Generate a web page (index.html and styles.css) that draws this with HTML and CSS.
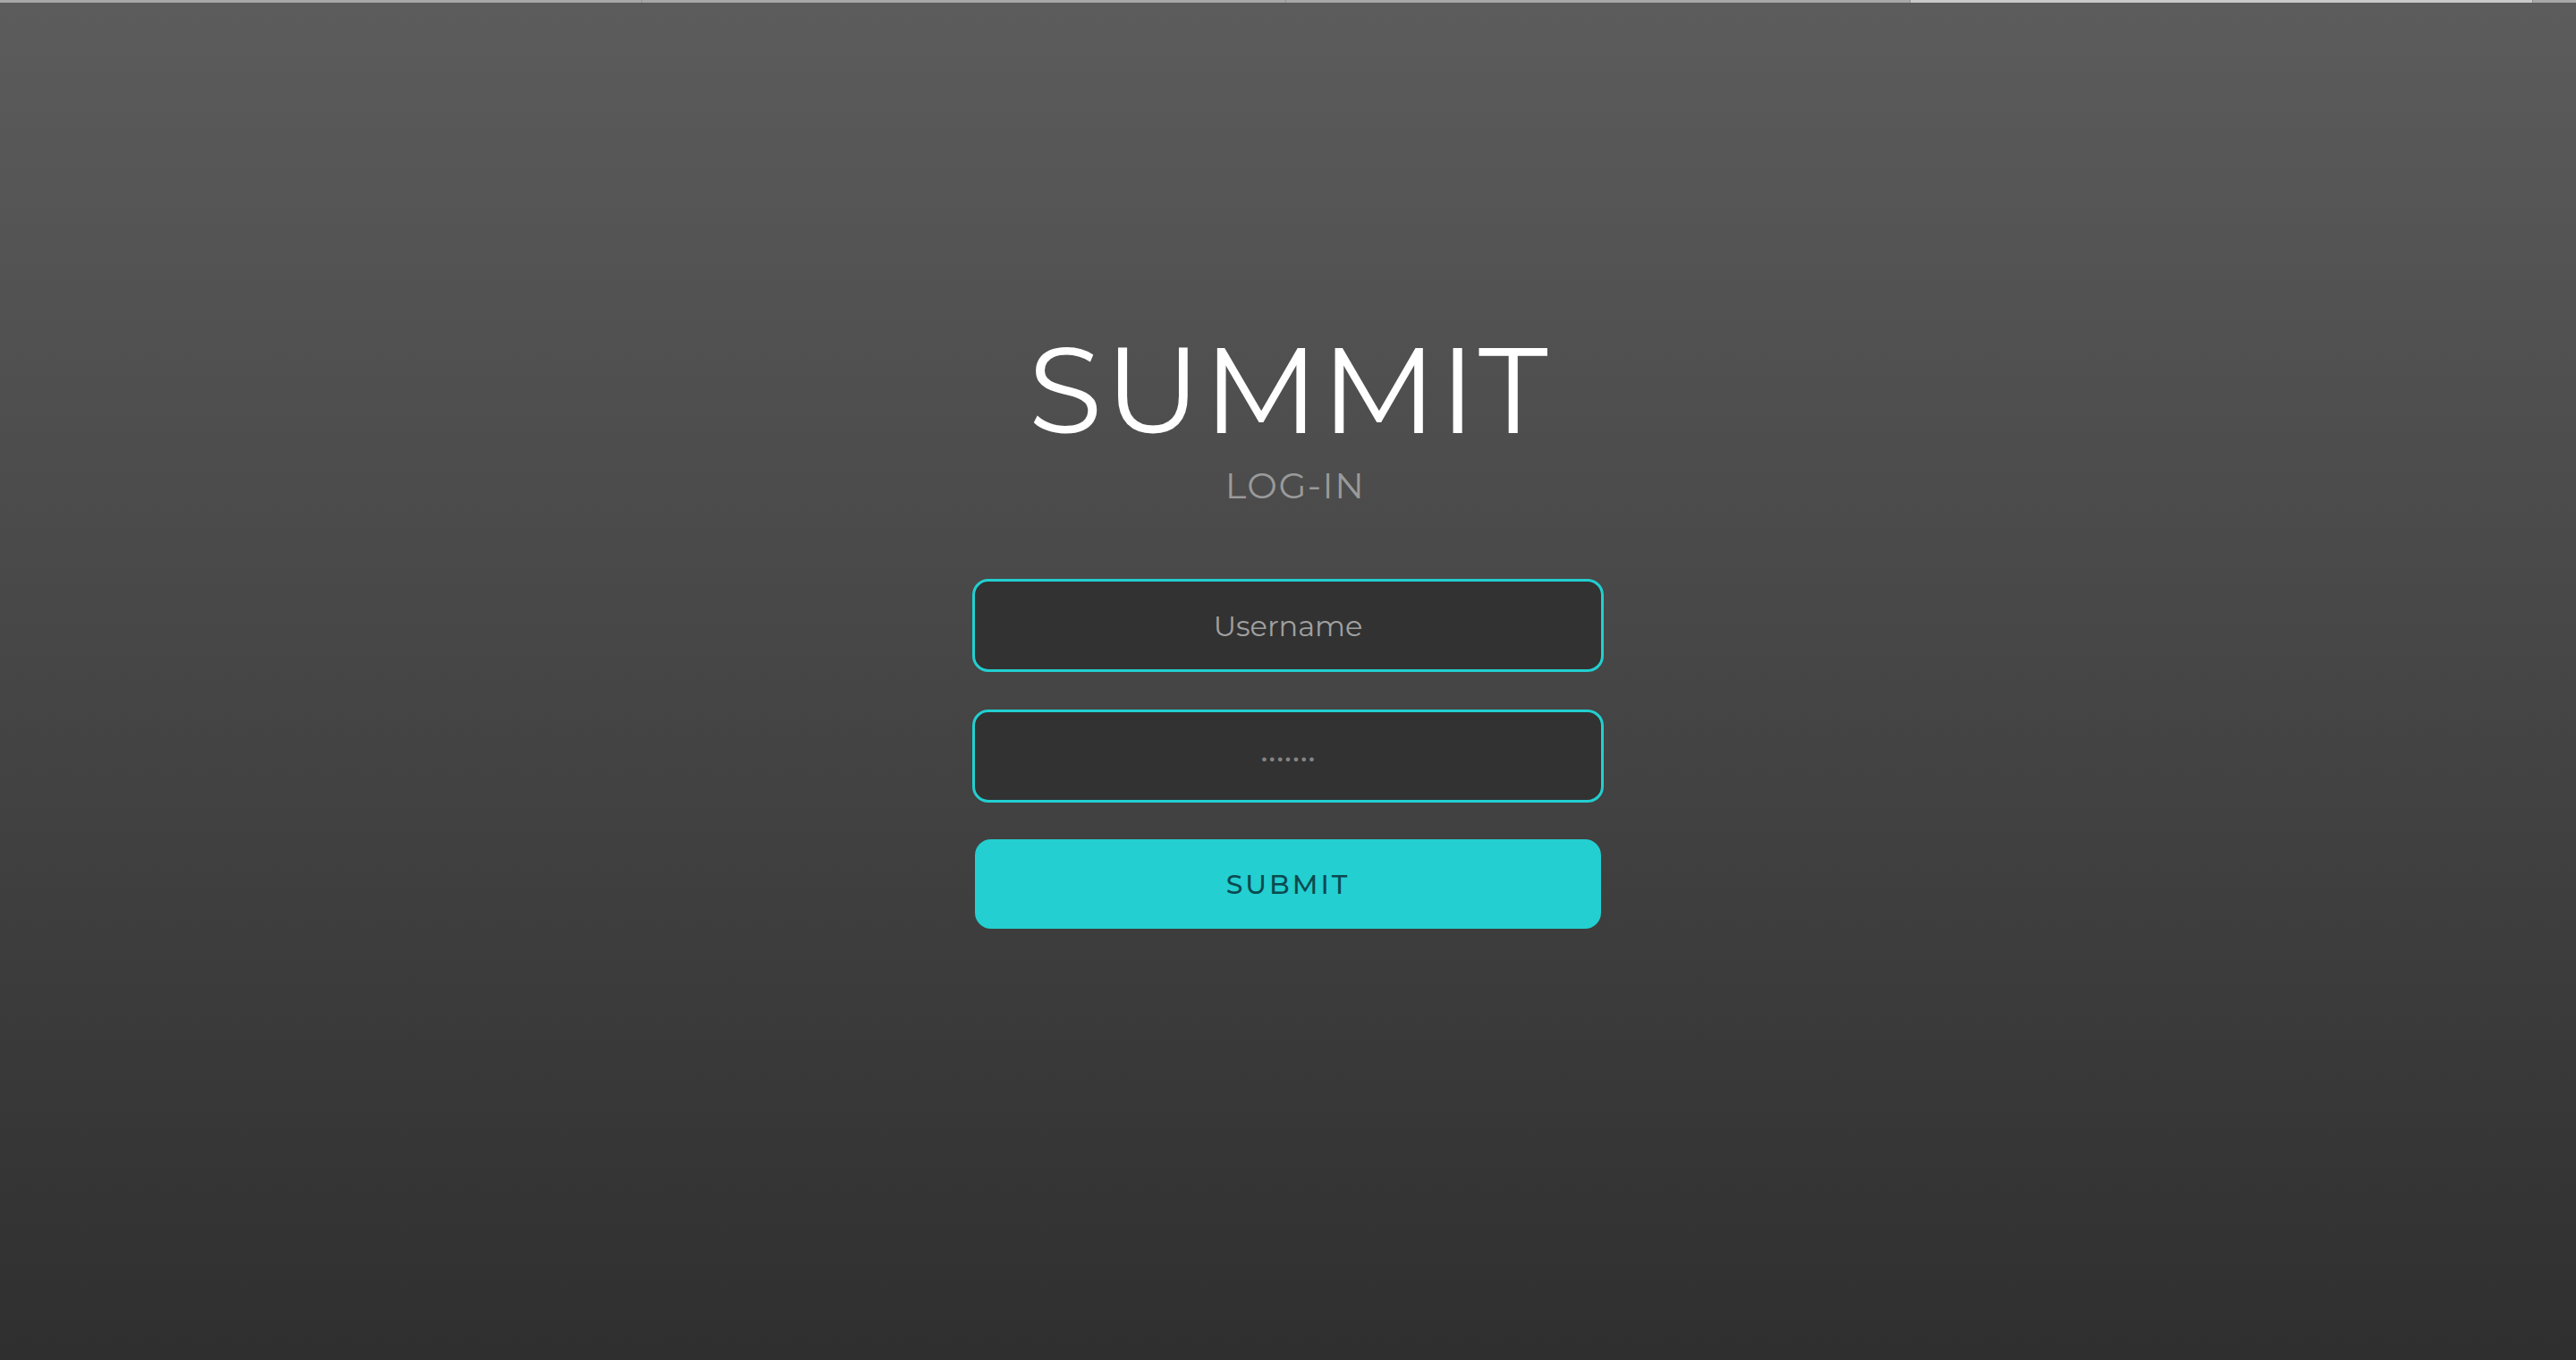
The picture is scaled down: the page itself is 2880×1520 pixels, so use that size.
FILE: index.html
```html
<!DOCTYPE html>
<html lang="en">
<head>
<meta charset="utf-8">
<title>Summit - Log-in</title>
<link rel="stylesheet" href="styles.css">
</head>
<body>
<div class="tabstrip">
  <div class="tab tab-1"></div>
  <div class="tab tab-2"></div>
  <div class="tab tab-3"></div>
  <div class="tab tab-active"></div>
  <div class="tab tab-end"></div>
</div>
<main class="login">
  <h1 class="brand">SUMMIT</h1>
  <h2 class="subtitle">LOG-IN</h2>
  <form class="form">
    <input class="field" type="text" placeholder="Username">
    <input class="field field-pass" type="text" placeholder="•••••••">
    <button class="submit" type="button">SUBMIT</button>
  </form>
</main>
</body>
</html>
```
FILE: styles.css
```css
html, body {
  margin: 0;
  padding: 0;
  height: 100%;
}
body {
  background: linear-gradient(to bottom, #5c5c5c 0%, #2f2f2f 100%);
  font-family: Montserrat, Inter, "Open Sans", sans-serif;
  min-height: 1520px;
  overflow: hidden;
}
.tabstrip {
  display: flex;
  height: 3px;
  background: #a8a8a8;
}
.tab {
  border-right: 1px solid #8e8e8e;
  box-sizing: border-box;
}
.tab-1 { flex: 0 0 718px; }
.tab-2 { flex: 0 0 720px; }
.tab-3 { flex: 0 0 698px; }
.tab-active {
  flex: 0 0 696px;
  background: #c9c9c9;
}
.tab-end {
  flex: 1;
  border-right: none;
}
.login {
  display: flex;
  flex-direction: column;
  align-items: center;
  padding-top: 365px;
}
.brand {
  margin: 0;
  font-size: 135px;
  line-height: 1;
  font-weight: 400;
  color: #ffffff;
  letter-spacing: 3px;
  padding-left: 3px;
}
.subtitle {
  margin: 20px 0 0 0;
  font-size: 40px;
  line-height: 1;
  font-weight: 400;
  color: #9a9a9a;
  letter-spacing: 1.5px;
  padding-left: 16px;
}
.form {
  margin-top: 84px;
  display: flex;
  flex-direction: column;
  align-items: center;
  gap: 42px;
}
.field {
  box-sizing: border-box;
  width: 706px;
  height: 104px;
  border: 3px solid #22cfd0;
  border-radius: 18px;
  background: #323232;
  color: #a0a0a0;
  font-family: inherit;
  font-size: 32px;
  font-weight: 400;
  text-align: center;
  outline: none;
}
.field::placeholder {
  color: #a0a0a0;
}
.field-pass::placeholder {
  color: #858585;
  font-size: 30px;
  letter-spacing: 0;
}
.submit {
  margin-top: -1px;
  box-sizing: border-box;
  width: 700px;
  height: 100px;
  border: none;
  border-radius: 18px;
  background: #23cfd0;
  color: #0b4a50;
  font-family: inherit;
  font-size: 30px;
  font-weight: 500;
  letter-spacing: 3px;
  cursor: pointer;
}
```
